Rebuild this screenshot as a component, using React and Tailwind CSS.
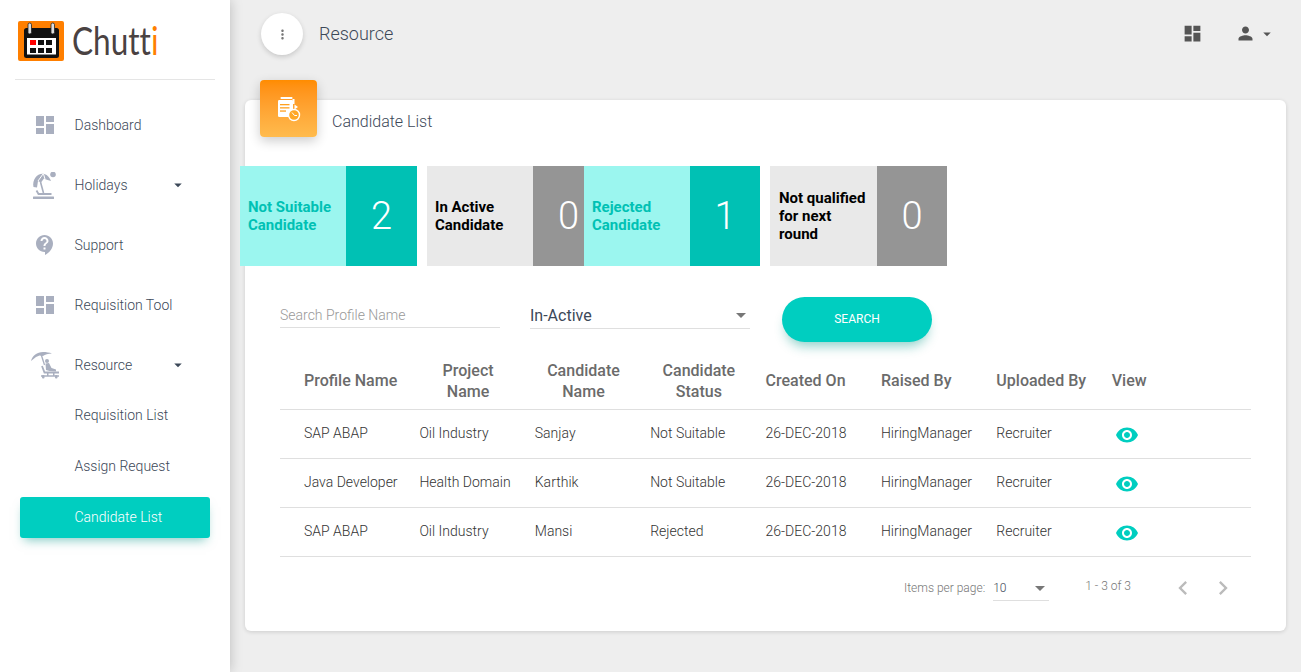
import { MdDashboard, MdContactSupport, MdArrowDropDown, MdMoreVert, MdPerson, MdVisibility, MdChevronLeft, MdChevronRight } from 'react-icons/md'

const rows = [
  ['SAP ABAP', 'Oil Industry', 'Sanjay', 'Not Suitable'],
  ['Java Developer', 'Health Domain', 'Karthik', 'Not Suitable'],
  ['SAP ABAP', 'Oil Industry', 'Mansi', 'Rejected'],
]

function LogoIcon() {
  return (
    <svg width="46" height="40" viewBox="0 0 46 40" className="shrink-0">
      <rect width="46" height="40" rx="2" fill="#ff7f00" />
      <rect x="6" y="7" width="35" height="30" rx="2.500" fill="#111" />
      <rect x="9" y="17" width="29" height="16.500" fill="#fff" />
      <rect x="12" y="19" width="6" height="5" fill="#f00" />
      <rect x="20" y="19" width="6" height="5" fill="#111" />
      <rect x="28" y="19" width="6" height="5" fill="#111" />
      <rect x="12" y="27" width="6" height="5" fill="#111" />
      <rect x="20" y="27" width="6" height="5" fill="#111" />
      <rect x="28" y="27" width="6" height="5" fill="#111" />
      <rect x="10" y="2" width="3.500" height="11" rx="1.700" fill="#ddd" stroke="#222" strokeWidth="0.8" />
      <rect x="33" y="2" width="3.500" height="11" rx="1.700" fill="#ddd" stroke="#222" strokeWidth="0.8" />
    </svg>
  )
}

function BeachIcon() {
  return (
    <svg width="26" height="27" viewBox="6 3 26 27" fill="#a9afbf">
      <circle cx="27" cy="5.500" r="2.800" />
      <path d="M7.500 18 C6 11 11 4.500 17 4.800 C20.500 5 23.500 8 25 12 L20 10.500 L18 9.500 L15 13.500 L12 12 L11 18.500 Z" />
      <path d="M17 5 L12 12 M17.500 5 L19 10" stroke="#fff" strokeWidth="1" fill="none" />
      <path d="M14.500 13 L17.500 24" stroke="#a9afbf" strokeWidth="1.600" fill="none" />
      <path d="M10.500 21.500 L12.500 25 H25.500" stroke="#a9afbf" strokeWidth="1.800" fill="none" />
      <rect x="7" y="27.500" width="21" height="2.500" rx="0.500" />
    </svg>
  )
}

function LoungerIcon() {
  return (
    <svg width="30" height="28" viewBox="4 3 30 28" fill="#a9afbf">
      <path d="M5 13 C6.500 7.500 11 4 17 4 C20 4 23.500 4.500 26 5.500 C22 5.500 19 6.500 17 8 L13.500 7.500 L10 9 Z" />
      <path d="M15 6 L18.500 17" stroke="#a9afbf" strokeWidth="1.300" fill="none" />
      <circle cx="21" cy="13" r="2" />
      <path d="M19.500 15.500 L23 15 L25.500 20 L30 21.500 L30 23.500 L23.500 23 L20 22 Z" />
      <path d="M16 18 L18.500 24.500 H33" stroke="#a9afbf" strokeWidth="1.800" fill="none" />
      <path d="M15 28 H33" stroke="#a9afbf" strokeWidth="1.500" fill="none" />
      <rect x="16" y="27" width="2.500" height="3.500" rx="1" />
      <rect x="29" y="27" width="2.500" height="3.500" rx="1" />
      <rect x="21" y="24" width="1.500" height="4" />
      <rect x="27" y="24" width="1.500" height="4" />
    </svg>
  )
}

function CandidateIcon() {
  return (
    <svg width="34" height="34" viewBox="0 0 34 34" fill="#fff">
      <rect x="8.500" y="5" width="12" height="2" rx="0.800" />
      <rect x="20.500" y="7" width="2" height="5" />
      <path d="M22.500 12.500 L26 15 L22.500 17.500 Z" />
      <rect x="6" y="8" width="15" height="17" rx="1.200" />
      <rect x="8" y="12" width="9.500" height="1.300" fill="#ffa01e" />
      <rect x="8" y="15.200" width="9.500" height="1.300" fill="#ffa01e" />
      <rect x="8" y="18.400" width="6" height="1.300" fill="#ffa01e" />
      <circle cx="22" cy="23" r="5.500" fill="#ffa828" stroke="#fff" strokeWidth="1.400" />
      <path d="M20 20.500 L22.500 23.500 H25" fill="none" stroke="#fff" strokeWidth="1" />
    </svg>
  )
}

function NavItem({ icon, label, caret }) {
  return (
    <div className="flex items-center h-[60px] pl-[30px] pr-[43px] text-[14px] font-light text-[#3c4858]">
      <div className="w-[30px] flex justify-center shrink-0">{icon}</div>
      <span className="ml-[14.5px] flex-1">{label}</span>
      {caret && <MdArrowDropDown size={18} className="text-[#3c4858]" />}
    </div>
  )
}

function SubItem({ label }) {
  return <div className="h-[51px] pl-[74.5px] flex items-center text-[14px] font-light text-[#3c4858]">{label}</div>
}

function Stat({ label, value, active, className, labelWidth = 'w-[106px]', numWidth = 'w-[71px]' }) {
  return (
    <div className={'flex h-[100px] ' + className}>
      <div className={labelWidth + ' shrink-0 flex items-center pl-[8px] text-[15px] leading-[18px] font-bold ' + (active ? 'bg-[#9bf6ef] text-[#00c1b4]' : 'bg-[#e9e9e9] text-black')}>
        <span>{label}</span>
      </div>
      <div className={numWidth + ' shrink-0 flex items-center justify-center text-[38px] font-light text-white ' + (active ? 'bg-[#00c1b4]' : 'bg-[#959595]')}>{value}</div>
    </div>
  )
}

export default function App() {
  return (
    <div className="flex h-[672px] overflow-hidden bg-[#eeeeee] font-['Roboto',sans-serif]">
      <aside className="w-[230px] shrink-0 bg-white shadow-[0_0_12px_rgba(0,0,0,0.22)] relative">
        <div className="mx-[15px] h-[80px] border-b border-[#e5e5e5] flex items-start pt-[21px] pl-[3px]">
          <LogoIcon />
          <span className="inline-block ml-[8px] -mt-[2px] text-[38px] leading-[42px] text-[#4a4242] font-['Lato',sans-serif] [font-variant-ligatures:none] origin-left scale-x-[0.83]">Chutt<span className="text-[#ff7f00]">i</span></span>
        </div>
        <div className="mt-[15px]">
          <NavItem icon={<MdDashboard size={24} className="text-[#a9afbf]" />} label="Dashboard" />
          <NavItem icon={<BeachIcon />} label="Holidays" caret />
          <NavItem icon={<MdContactSupport size={24} className="text-[#a9afbf]" />} label="Support" />
          <NavItem icon={<MdDashboard size={24} className="text-[#a9afbf]" />} label="Requisition Tool" />
          <NavItem icon={<LoungerIcon />} label="Resource" caret />
          <div className="-mt-[5px]">
            <SubItem label="Requisition List" />
            <SubItem label="Assign Request" />
          </div>
          <div className="mx-[20px] h-[41px] mt-[5px] pl-[54.5px] flex items-center rounded-[3px] bg-[#00cec0] text-white text-[14px] font-light shadow-[0_6px_10px_-4px_rgba(0,150,136,0.5)]">
            Candidate List
          </div>
        </div>
      </aside>

      <main className="flex-1 min-w-0 pl-[15px] pr-[15px]">
        <header className="h-[68px] flex items-start pt-[13px] pl-[16px]">
          <div className="w-[42px] h-[42px] rounded-full bg-white shadow-[0_2px_5px_rgba(0,0,0,0.16)] flex items-center justify-center">
            <MdMoreVert size={15} className="text-[#777]" />
          </div>
          <span className="ml-[16px] mt-[9px] text-[18px] leading-[24px] font-light text-[#3c4858]">Resource</span>
          <div className="ml-auto flex items-center mt-[10px] pr-[10px] text-[#555]">
            <MdDashboard size={21} />
            <MdPerson size={21} className="ml-[32px]" />
            <MdArrowDropDown size={18} className="ml-[2px]" />
          </div>
        </header>

        <section className="relative mt-[32px] h-[531px] bg-white rounded-[6px] shadow-[0_1px_4px_rgba(0,0,0,0.14)]">
          <div className="absolute left-[15px] -top-[20px] w-[57px] h-[57px] rounded-[4px] bg-gradient-to-b from-[#ff8c00] to-[#ffbb4d] shadow-[0_4px_12px_rgba(0,0,0,0.2)] flex items-center justify-center">
            <CandidateIcon />
          </div>
          <div className="pl-[87px] pt-[12px] text-[16px] leading-[20px] font-light text-[#3c4858]">Candidate List</div>

          <div className="flex mt-[34px] -ml-[5px]">
            <Stat className="mr-[10px]" label={<>Not Suitable<br />Candidate</>} value="2" active />
            <Stat className="-mr-[20px]" label={<>In Active<br />Candidate</>} value="0" />
            <Stat className="mr-[10px] relative" numWidth="w-[70px]" label={<>Rejected<br />Candidate</>} value="1" active />
            <Stat labelWidth="w-[107px]" numWidth="w-[70px]" label={<span className="pl-[1px] block">Not qualified<br />for next<br />round</span>} value="0" />
          </div>

          <div className="flex items-start mt-[31px] pl-[35px]">
            <div className="w-[220px] h-[31px] border-b border-[#dfdfdf] flex items-center text-[14px] font-light text-[#999] pt-[7px]">Search Profile Name</div>
            <div className="w-[220px] h-[32px] ml-[30px] border-b border-[#dfdfdf] flex items-center justify-between text-[16px] font-normal text-[#3c4858] pt-[6px]">
              In-Active
              <MdArrowDropDown size={24} className="text-[#777] -mr-[3px] -mt-[1px]" />
            </div>
            <button className="w-[150px] h-[45px] ml-[32px] pb-[2px] rounded-full bg-[#00cec0] text-white text-[12px] font-normal shadow-[0_8px_12px_-4px_rgba(0,150,136,0.45)]">SEARCH</button>
          </div>

          <table className="mt-[10px] ml-[35px] w-[971px] table-fixed text-[14px] font-light text-[#333]">
            <thead>
              <tr className="h-[57px] border-b border-[#dfdfdf] text-[16px] leading-[21px] font-medium text-[#6b6b6b]">
                <th className="w-[115.4px] pl-[24px] text-left font-medium whitespace-nowrap">Profile Name</th>
                <th className="w-[115.4px] pl-[30px] pt-[2px] text-center font-medium">Project Name</th>
                <th className="w-[115.4px] pl-[30px] pt-[2px] text-center font-medium">Candidate Name</th>
                <th className="w-[115.4px] pl-[30px] pt-[2px] text-center font-medium">Candidate Status</th>
                <th className="w-[115.4px] pl-[24px] text-left font-medium whitespace-nowrap">Created On</th>
                <th className="w-[115.4px] pl-[24px] text-left font-medium whitespace-nowrap">Raised By</th>
                <th className="w-[115.4px] pl-[24px] text-left font-medium whitespace-nowrap">Uploaded By</th>
                <th className="pl-[24px] text-left font-medium">View</th>
              </tr>
            </thead>
            <tbody>
              {rows.map((r, i) => (
                <tr key={i} className="h-[49px] border-b border-[#dfdfdf]">
                  {r.map((c) => <td key={c} className="pl-[24px] whitespace-nowrap">{c}</td>)}
                  <td className="pl-[24px] whitespace-nowrap">26-DEC-2018</td>
                  <td className="pl-[24px] whitespace-nowrap">HiringManager</td>
                  <td className="pl-[24px] whitespace-nowrap">Recruiter</td>
                  <td className="pl-[27px] pt-[2px]"><MdVisibility size={24} className="text-[#00cec0]" /></td>
                </tr>
              ))}
            </tbody>
          </table>

          <div className="flex items-start justify-end mr-[49px] mt-[10px] text-[12px] font-light text-[#777]">
            <span className="mt-[12px]">Items per page:</span>
            <div className="w-[56px] h-[34px] ml-[8px] pt-[9px] border-b border-[#dfdfdf] flex items-center justify-between text-[#3c4858]">
              10
              <MdArrowDropDown size={24} className="text-[#777] -mr-[3px]" />
            </div>
            <span className="ml-[36px] mt-[10px]">1 - 3 of 3</span>
            <MdChevronLeft size={28} className="ml-[38px] mt-[7px] text-[#bbb]" />
            <MdChevronRight size={28} className="ml-[12px] mt-[7px] text-[#bbb]" />
          </div>
        </section>
      </main>
    </div>
  )
}
